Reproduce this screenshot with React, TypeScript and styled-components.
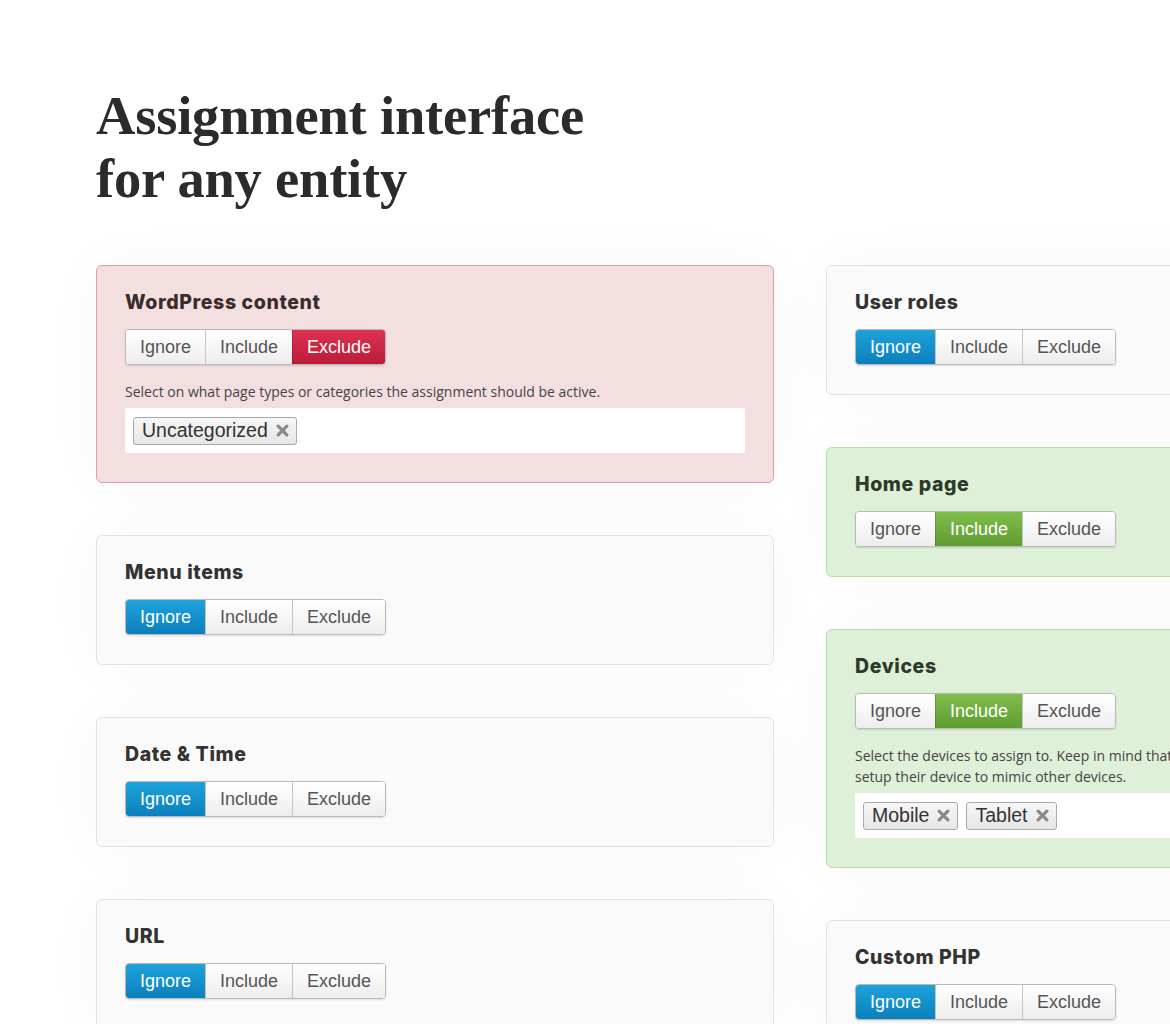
import React from "react";
import styled, { createGlobalStyle, css } from "styled-components";

const Global = createGlobalStyle`
  html, body { margin: 0; padding: 0; background: #ffffff; }
  body { overflow: hidden; font-family: "Liberation Sans", Arial, sans-serif; }
  * { box-sizing: border-box; }
`;

const Page = styled.div`
  width: 1170px;
  height: 1024px;
  overflow: hidden;
  padding: 84px 0 0 96px;
`;

const Title = styled.h1`
  margin: 0 0 55px 0;
  font-family: "Liberation Serif", "Times New Roman", serif;
  font-weight: 700;
  font-size: 54.5px;
  line-height: 63px;
  color: #2b2b2b;
  letter-spacing: -0.2px;
`;

const Columns = styled.div`
  display: grid;
  grid-template-columns: 678px 678px;
  column-gap: 52px;
  width: max-content;
  align-items: start;
`;

const Column = styled.div`
  display: flex;
  flex-direction: column;
  gap: 52px;
`;

type Tone = "neutral" | "red" | "green";

const toneStyles: Record<Tone, ReturnType<typeof css>> = {
  neutral: css`
    background: #fafafa;
    border-color: #e3e3e3;
  `,
  red: css`
    background: #f4dfe0;
    border-color: #dc9ea9;
  `,
  green: css`
    background: #dff0d9;
    border-color: #b9dcab;
  `,
};

const Card = styled.section<{ $tone: Tone }>`
  border: 1.5px solid;
  border-radius: 6px;
  padding: 25px 28px 29px 28px;
  box-shadow: 0 0 60px rgba(0, 0, 0, 0.035);
  ${(p) => toneStyles[p.$tone]}
`;

const CardTitle = styled.h2<{ $tone: Tone }>`
  margin: 0 0 15px 0;
  font-family: "Inter", "Open Sans", sans-serif;
  font-weight: 800;
  font-size: 19.5px;
  letter-spacing: 0.6px;
  line-height: 23px;
  color: ${(p) => (p.$tone === "green" ? "#2c3a28" : p.$tone === "red" ? "#3a2b2c" : "#333333")};
`;

const Group = styled.div`
  display: inline-flex;
  height: 36px;
  border: 1px solid #b9b9b9;
  border-radius: 4px;
  overflow: hidden;
  box-shadow: 0 1px 2px rgba(0, 0, 0, 0.12);
`;

type Mode = "ignore" | "include" | "exclude";

const activeBg: Record<Mode, string> = {
  ignore: "linear-gradient(#1ea3dc, #0b7fbb)",
  include: "linear-gradient(#80bd4c, #5f9d32)",
  exclude: "linear-gradient(#dd3250, #bc1c3a)",
};

const Segment = styled.div<{ $mode: Mode; $active: boolean; $first: boolean }>`
  display: flex;
  align-items: center;
  justify-content: center;
  padding: 0 14px;
  font-family: "Liberation Sans", Arial, sans-serif;
  font-size: 18px;
  color: #555555;
  background: linear-gradient(#ffffff, #ededed);
  border-left: ${(p) => (p.$first ? "none" : "1px solid #c4c4c4")};
  ${(p) =>
    p.$active &&
    css`
      background: ${activeBg[p.$mode]};
      color: #ffffff;
      border-left-color: rgba(0, 0, 0, 0.15);
    `}
`;

const Desc = styled.p`
  margin: 16px 0 6px 0;
  font-family: "Open Sans", sans-serif;
  font-size: 14px;
  line-height: 21px;
  color: #444444;
  white-space: nowrap;
  overflow: hidden;
`;

const SelectBox = styled.div`
  display: flex;
  gap: 8px;
  align-items: center;
  height: 45px;
  padding: 0 8px;
  background: #ffffff;
  border-radius: 2px;
`;

const Tag = styled.div`
  display: inline-flex;
  align-items: center;
  gap: 8px;
  height: 28px;
  padding: 0 7px 0 8px;
  border: 1px solid #a9a9a9;
  border-radius: 3px;
  background: linear-gradient(#f6f6f6, #e6e6e6);
  font-family: "Liberation Sans", Arial, sans-serif;
  font-size: 19.5px;
  color: #333333;
`;

const Remove = styled.svg`
  width: 13px;
  height: 13px;
  display: block;
`;

const X = () => (
  <Remove viewBox="0 0 12 12">
    <path d="M2 2 L10 10 M10 2 L2 10" stroke="#8a8a8a" strokeWidth="3" strokeLinecap="round" />
  </Remove>
);

type CardData = {
  title: string;
  mode: Mode;
  desc?: string[];
  tags?: string[];
};

const toneFor = (m: Mode): Tone => (m === "exclude" ? "red" : m === "include" ? "green" : "neutral");

const AssignCard = ({ title, mode, desc, tags }: CardData) => {
  const tone = toneFor(mode);
  const modes: Mode[] = ["ignore", "include", "exclude"];
  const labels: Record<Mode, string> = { ignore: "Ignore", include: "Include", exclude: "Exclude" };
  return (
    <Card $tone={tone}>
      <CardTitle $tone={tone}>{title}</CardTitle>
      <Group>
        {modes.map((m, i) => (
          <Segment key={m} $mode={m} $active={m === mode} $first={i === 0}>
            {labels[m]}
          </Segment>
        ))}
      </Group>
      {desc && (
        <Desc>
          {desc.map((line, i) => (
            <React.Fragment key={i}>
              {i > 0 && <br />}
              {line}
            </React.Fragment>
          ))}
        </Desc>
      )}
      {tags && (
        <SelectBox>
          {tags.map((t) => (
            <Tag key={t}>
              {t}
              <X />
            </Tag>
          ))}
        </SelectBox>
      )}
    </Card>
  );
};

const left: CardData[] = [
  {
    title: "WordPress content",
    mode: "exclude",
    desc: ["Select on what page types or categories the assignment should be active."],
    tags: ["Uncategorized"],
  },
  { title: "Menu items", mode: "ignore" },
  { title: "Date & Time", mode: "ignore" },
  { title: "URL", mode: "ignore" },
];

const right: CardData[] = [
  { title: "User roles", mode: "ignore" },
  { title: "Home page", mode: "include" },
  {
    title: "Devices",
    mode: "include",
    desc: [
      "Select the devices to assign to. Keep in mind that devices detection is not always accurate.",
      "setup their device to mimic other devices.",
    ],
    tags: ["Mobile", "Tablet"],
  },
  { title: "Custom PHP", mode: "ignore" },
];

export default function App() {
  return (
    <>
      <Global />
      <Page>
        <Title>
          Assignment interface
          <br />
          for any entity
        </Title>
        <Columns>
          <Column>
            {left.map((c) => (
              <AssignCard key={c.title} {...c} />
            ))}
          </Column>
          <Column>
            {right.map((c) => (
              <AssignCard key={c.title} {...c} />
            ))}
          </Column>
        </Columns>
      </Page>
    </>
  );
}
